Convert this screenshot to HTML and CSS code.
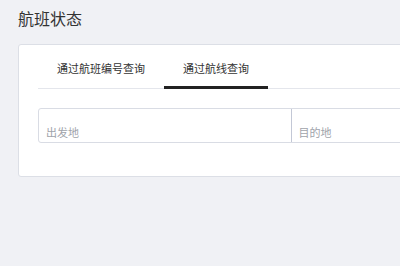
FILE: index.html
```html
<!DOCTYPE html>
<html lang="zh">
<head>
<meta charset="utf-8">
<title>航班状态</title>
<link rel="stylesheet" href="styles.css">
</head>
<body>
<div class="page">
  <h1 class="title">航班状态</h1>
  <div class="card">
    <div class="tabs">
      <div class="tab">通过航班编号查询</div>
      <div class="tab active">通过航线查询</div>
    </div>
    <div class="route">
      <div class="field">出发地</div>
      <div class="field">目的地</div>
    </div>
  </div>
</div>
</body>
</html>
```

FILE: styles.css
```css
html, body {
  margin: 0;
  padding: 0;
  width: 400px;
  height: 266px;
  overflow: hidden;
  background: #f0f1f5;
  font-family: "Noto Sans CJK SC", "Noto Sans", sans-serif;
}
.page {
  padding: 6px 0 0 18px;
}
.title {
  margin: 0;
  font-size: 16px;
  line-height: 24px;
  font-weight: 400;
  color: #333;
}
.card {
  margin-top: 14px;
  width: 506px;
  background: #fff;
  border: 1px solid #dcdfe6;
  border-radius: 3px;
  padding: 0 19px 33px;
}
.tabs {
  display: flex;
  border-bottom: 1px solid #e4e6ec;
  padding-top: 7px;
}
.tab {
  padding: 0 19px 3px;
  font-size: 11px;
  line-height: 20px;
  height: 31px;
  display: flex;
  align-items: center;
  color: #333;
  margin-bottom: -1px;
  border-bottom: 3px solid transparent;
}
.tab.active {
  border-bottom-color: #222;
}
.route {
  margin-top: 19px;
  display: flex;
  border: 1px solid #d9dce4;
  border-radius: 3px;
  height: 33px;
}
.field {
  flex: 1;
  font-size: 11px;
  color: #a0a3aa;
  padding: 14px 0 0 7px;
  line-height: 19px;
}
.field + .field {
  border-left: 1px solid #c3c8d6;
}
```
